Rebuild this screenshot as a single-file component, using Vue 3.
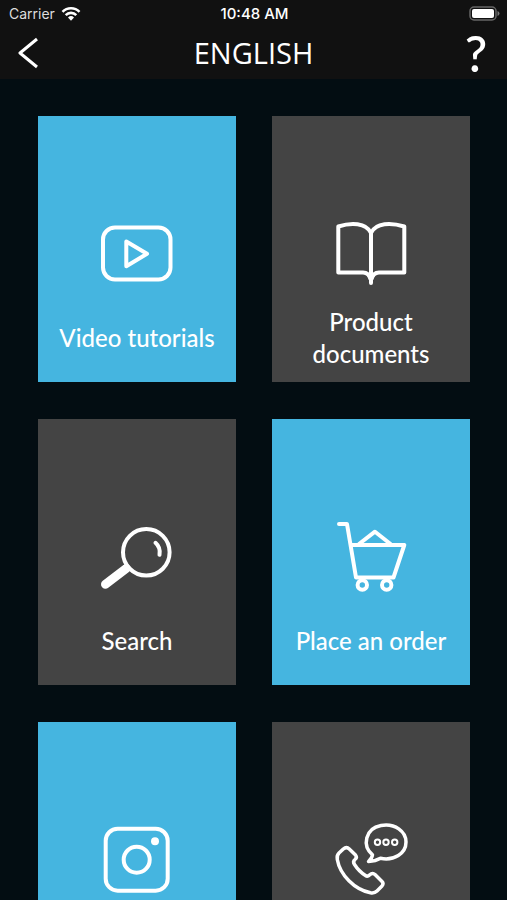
<script setup>
const tiles = [
  { id: 'video', label: 'Video tutorials', tone: 'blue' },
  { id: 'docs', label: 'Product documents', tone: 'grey' },
  { id: 'search', label: 'Search', tone: 'grey' },
  { id: 'order', label: 'Place an order', tone: 'blue' },
  { id: 'instagram', label: '', name: 'Instagram', tone: 'blue' },
  { id: 'contact', label: '', name: 'Contact', tone: 'grey' },
]
</script>

<template>
  <div class="screen">
    <header class="top">
      <div class="status">
        <div class="carrier">
          <span>Carrier</span>
          <svg class="wifi" viewBox="0 0 20 16" aria-hidden="true">
            <path d="M1.500 5.800a12 12 0 0 1 17 0M4.700 9.100a7.500 7.500 0 0 1 10.600 0" fill="none" stroke="#fff" stroke-width="2.6" />
            <path d="M7 11.4a4.400 4.400 0 0 1 6 0L10 14.800z" fill="#fff" />
          </svg>
        </div>
        <span class="time">10:48 AM</span>
        <div class="power">
          <svg class="battery" viewBox="0 0 31 15" aria-hidden="true">
            <rect x="1" y="1" width="26" height="13" rx="4" fill="none" stroke="#666" stroke-width="1.500" />
            <rect x="3" y="3" width="22" height="9" rx="2" fill="#fff" />
            <path d="M28.500 5v5q2-.8 2-2.500t-2-2.500z" fill="#777" />
          </svg>
        </div>
      </div>
      <nav class="bar">
        <button class="back" type="button" aria-label="Back">
          <svg viewBox="0 0 24 34" aria-hidden="true">
            <path d="M19 3 2 17 19 31" fill="none" stroke="#fff" stroke-width="3" stroke-linejoin="round" />
          </svg>
        </button>
        <h1>ENGLISH</h1>
        <button class="help" type="button" aria-label="Help">?</button>
      </nav>
    </header>

    <main class="grid">
      <button v-for="t in tiles" :key="t.id" type="button" class="tile" :class="t.tone" :aria-label="t.label || t.name">
        <svg class="icon" viewBox="0 0 80 80" aria-hidden="true">
          <g v-if="t.id === 'video'">
            <rect x="6" y="13.500" width="67.500" height="52" rx="12" />
            <path d="M29.300 27.500V52.200L50 39.800z" />
          </g>
          <g v-else-if="t.id === 'docs'">
            <path d="M40 19C35 8.500 20 8.500 7.300 12.500V58.500H32Q38 58.500 40 66Q42 58.500 48 58.500H73.300V12.500C60 8.500 45 8.500 40 19V69" />
            <path class="solid" d="M35 59h10l-3 7h-4z" />
          </g>
          <g v-else-if="t.id === 'search'">
            <circle cx="49.300" cy="35.300" r="23.300" />
            <path d="M28.500 52 8.500 67.300" stroke-width="9" />
            <path d="M28.500 52 32.500 48.800" stroke-width="8.500" stroke-linecap="butt" />
            <path d="M58.500 25.800Q63.800 30.500 62.500 37.800" />
          </g>
          <g v-else-if="t.id === 'order'">
            <path d="M8 7H16L25 60.500H62.500L73.300 28H20" />
            <path d="M28 27 44 14.700 59.500 27" />
            <circle cx="31.300" cy="68" r="4.700" />
            <circle cx="55.700" cy="68" r="4.700" />
          </g>
          <g v-else-if="t.id === 'instagram'">
            <rect x="8.700" y="8.700" width="62" height="62" rx="12" />
            <circle cx="39.700" cy="39.700" r="13" />
            <circle class="solid" cx="58" cy="21.300" r="4" />
          </g>
          <g v-else stroke-width="3.500">
            <path d="M41.500 34.800C31 26 34 8.500 50 5.500C64 3 75 11.500 75 22C75 33.500 63 41 49.500 38.300C45.500 40.700 41.500 41.300 37.500 41.500Q41 38.500 41.500 34.800z" />
            <g stroke-width="2">
              <circle cx="46.500" cy="22.300" r="2.700" />
              <circle cx="55" cy="22.300" r="2.700" />
              <circle cx="63.700" cy="22.300" r="2.700" />
            </g>
            <path d="M12.300 29Q15.500 26.300 18.300 29L24.500 35Q26.500 37.500 24 39.500Q21.500 41.500 23.500 44.500Q28 51.500 34.500 55.500Q36.500 57 38.500 55Q41.500 52.200 44 54.500L51 61.500Q53 63.500 51 66L46 71Q43.500 73.500 39.500 72.800C23.500 69.500 9 55 6.300 39.500Q5.500 35.500 8 33z" />
          </g>
        </svg>
        <span class="label">{{ t.label }}</span>
      </button>
    </main>
  </div>
</template>

<style>
body {
  background: #030d12;
}
</style>

<style scoped>
.screen {
  height: 100vh;
  display: flex;
  flex-direction: column;
  background: #030d12;
  color: #fff;
  overflow: hidden;
}
.top {
  flex: none;
  background: #111;
}
.status {
  display: grid;
  grid-template-columns: 1fr auto 1fr;
  align-items: center;
  height: 27px;
  padding: 0 7px 0 9px;
  font: 14px/27px Inter, sans-serif;
}
.carrier {
  display: flex;
  align-items: center;
  gap: 6px;
  color: #ddd;
}
.wifi {
  width: 20px;
  height: 16px;
}
.time {
  font-size: 15px;
  font-weight: 500;
}
.power {
  display: flex;
  justify-content: flex-end;
}
.battery {
  width: 31px;
  height: 15px;
}
.bar {
  display: grid;
  grid-template-columns: 1fr auto 1fr;
  align-items: center;
  height: 52px;
  padding: 0 18px;
}
button {
  margin: 0;
  padding: 0;
  border: 0;
  background: none;
  color: inherit;
  cursor: pointer;
}
.back {
  justify-self: start;
  width: 24px;
  height: 34px;
}
.back svg {
  display: block;
  width: 24px;
  height: 34px;
}
h1 {
  margin: 0;
  font: 400 29px/52px "Open Sans", sans-serif;
}
.help {
  justify-self: end;
  width: 26px;
  text-align: center;
  font: 500 50px/52px Lato, sans-serif;
}
.grid {
  flex: 1;
  min-height: 0;
  overflow-y: auto;
  scrollbar-width: none;
  display: grid;
  grid-template-columns: 1fr 1fr;
  grid-auto-rows: 266px;
  gap: 37px 36px;
  padding: 37px 37px 37px 38px;
}
.tile {
  display: flex;
  flex-direction: column;
  align-items: center;
  justify-content: flex-end;
  gap: 12px;
  padding: 0 16px 12px;
}
.blue {
  background: #45b5e0;
}
.grey {
  background: #444;
}
.icon {
  flex: none;
  width: 80px;
  height: 80px;
  fill: none;
  stroke: #fff;
  stroke-width: 4;
  stroke-linecap: round;
  stroke-linejoin: round;
}
.solid {
  fill: #fff;
  stroke: none;
}
.label {
  display: flex;
  align-items: center;
  height: 64px;
  font: 500 24px/32px Lato, sans-serif;
  text-align: center;
}
</style>
